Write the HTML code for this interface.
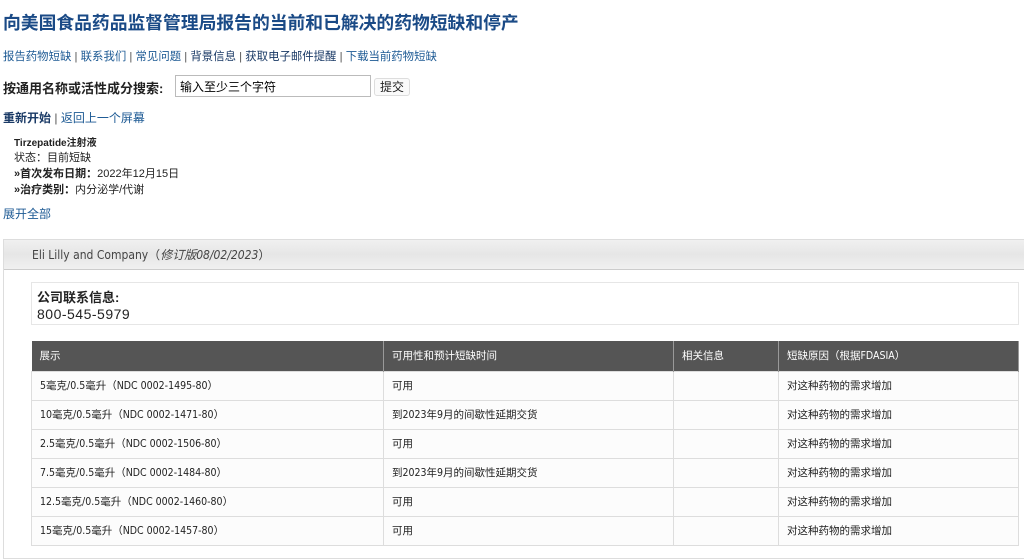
<!DOCTYPE html>
<html><head><meta charset="utf-8"><style>
*{margin:0;padding:0;box-sizing:border-box}
body{width:1024px;height:553px;overflow:hidden;background:#fff;font-family:"Liberation Sans","Noto Sans CJK SC",sans-serif;color:#222;position:relative}
.a{position:absolute;white-space:nowrap}
a,.l{color:#1d5a94;text-decoration:none}
h1{position:absolute;left:3px;top:9px;font-size:17.8px;color:#1a4a86;font-weight:bold;white-space:nowrap}
.nav{left:3px;top:48px;font-size:11.4px;color:#555}
.search{left:3px;top:78px;font-size:13px;font-weight:bold;color:#222}
input{position:absolute;left:175px;top:75px;width:196px;height:22px;border:1px solid #bbb;font-size:12px;padding-left:4px;font-family:inherit}
.btn{position:absolute;left:374px;top:78px;width:36px;height:18px;border:1px solid #ddd;border-radius:3px;background:#fafafa;font-size:12px;text-align:center;line-height:16px}
.det{left:14px;font-size:11px;color:#222}
.det b{font-weight:bold}
.panel{position:absolute;left:3px;top:239px;width:1030px;height:320px;border:1px solid #ddd}
.ph{height:30px;background:linear-gradient(#f0f0f0,#e6e6e6 50%,#f0f0f0);border-bottom:1px solid #ccc;font-size:12px;color:#444;padding:6px 0 0 28px;font-family:"DejaVu Sans Condensed","Liberation Sans","Noto Sans CJK SC",sans-serif}
.cb{position:absolute;left:31px;top:282px;width:988px;height:43px;border:1px solid #e6e6e6;padding:4px 0 0 5px;font-size:13px}
table{position:absolute;left:31px;top:341px;width:988px;border-collapse:collapse;font-size:10.5px;font-family:"DejaVu Sans Condensed","Liberation Sans","Noto Sans CJK SC",sans-serif}
th{background:#555;color:#fff;font-weight:normal;text-align:left;height:30px;padding-left:8px;border-right:1px solid #999}
td{height:29px;padding-left:8px;border:1px solid #ddd;color:#222;background:#fcfcfc}
</style></head><body>
<h1>向美国食品药品监督管理局报告的当前和已解决的药物短缺和停产</h1>
<div class="a nav"><span class="l">报告药物短缺</span> | <span class="l">联系我们</span> | <span class="l">常见问题</span> | <span style="color:#1a3a66">背景信息</span> | <span style="color:#1a3a66">获取电子邮件提醒</span> | <span class="l">下载当前药物短缺</span></div>
<div class="a search">按通用名称或活性成分搜索:</div>
<input value="输入至少三个字符">
<div class="btn">提交</div>
<div class="a" style="left:3px;top:109px;font-size:12px;color:#555"><b style="color:#1a3a66">重新开始</b> | <span class="l">返回上一个屏幕</span></div>
<div class="a det" style="top:134px;font-weight:bold;font-size:10px">Tirzepatide注射液</div>
<div class="a det" style="top:149px">状态：目前短缺</div>
<div class="a det" style="top:165px"><b>»首次发布日期：</b>2022年12月15日</div>
<div class="a det" style="top:181px"><b>»治疗类别：</b>内分泌学/代谢</div>
<div class="a l" style="left:3px;top:205px;font-size:12px">展开全部</div>
<div class="panel"><div class="ph">Eli Lilly and Company（<i>修订版08/02/2023</i>）</div></div>
<div class="cb"><b>公司联系信息:</b><br><span style="font-size:14px;letter-spacing:.5px">800-545-5979</span></div>
<table>
<tr><th style="width:352px">展示</th><th style="width:290px">可用性和预计短缺时间</th><th style="width:105px">相关信息</th><th>短缺原因（根据FDASIA）</th></tr>
<tr><td>5毫克/0.5毫升（NDC 0002-1495-80）</td><td>可用</td><td></td><td>对这种药物的需求增加</td></tr>
<tr><td>10毫克/0.5毫升（NDC 0002-1471-80）</td><td>到2023年9月的间歇性延期交货</td><td></td><td>对这种药物的需求增加</td></tr>
<tr><td>2.5毫克/0.5毫升（NDC 0002-1506-80）</td><td>可用</td><td></td><td>对这种药物的需求增加</td></tr>
<tr><td>7.5毫克/0.5毫升（NDC 0002-1484-80）</td><td>到2023年9月的间歇性延期交货</td><td></td><td>对这种药物的需求增加</td></tr>
<tr><td>12.5毫克/0.5毫升（NDC 0002-1460-80）</td><td>可用</td><td></td><td>对这种药物的需求增加</td></tr>
<tr><td>15毫克/0.5毫升（NDC 0002-1457-80）</td><td>可用</td><td></td><td>对这种药物的需求增加</td></tr>
</table>
</body></html>
